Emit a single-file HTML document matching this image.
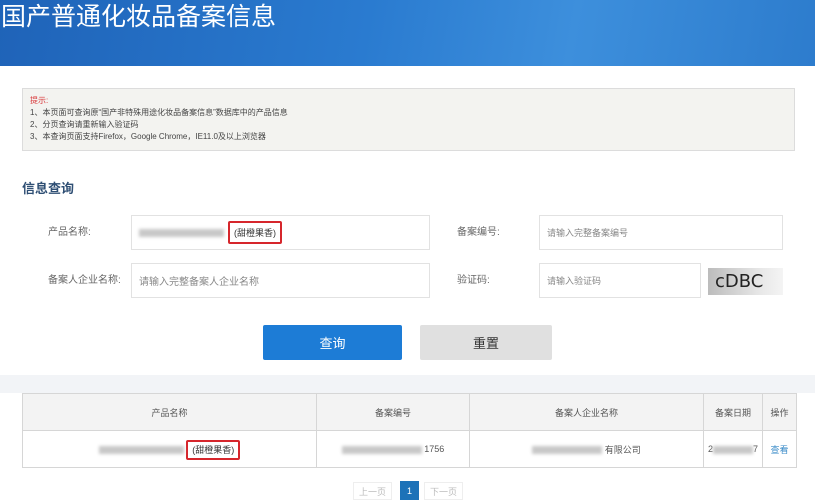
<!DOCTYPE html>
<html><head><meta charset="utf-8"><style>
*{margin:0;padding:0;box-sizing:border-box}
body{width:815px;height:500px;overflow:hidden;background:#fff;font-family:"Liberation Sans","Noto Sans CJK SC",sans-serif;position:relative;color:#555}
.abs{position:absolute}
.hdr{left:0;top:0;width:815px;height:66px;background:linear-gradient(100deg,#1f63b8 0%,#2a7bd0 45%,#3d8fdc 70%,#2d7ccd 100%)}
.hdr span{position:absolute;left:1px;top:0;font-size:25px;color:#fff;line-height:34px;letter-spacing:0}
.note{left:22px;top:88px;width:773px;height:63px;background:#f3f3f0;border:1px solid #dcdcdc;font-size:8px;line-height:12px;padding:6px 0 0 7px;color:#444}
.note .r{color:#d9383a}
.title{left:22px;top:178px;font-size:13px;font-weight:bold;color:#2f4f74}
.lbl{font-size:10px;color:#666;line-height:14px}
.inp{border:1px solid #e2e2e2;background:#fff;font-size:9px;color:#888;padding-left:7px;display:flex;align-items:center}
.btn{display:flex;align-items:center;justify-content:center;font-size:13px;border-radius:2px}
table{border-collapse:collapse;font-size:9px;color:#555}
td{border:1px solid #d6d6d6;text-align:center}
.red{border:2px solid #d6262c;border-radius:2px;padding:3px 4px;color:#333}
.blur{display:inline-block;height:8px;background:#c8c8c8;filter:blur(1.5px);vertical-align:middle}
.pg{font-size:9px;color:#bbb;display:flex;align-items:center;justify-content:center;border:1px solid #eee}
</style></head><body>
<div class="abs hdr"><span>国产普通化妆品备案信息</span></div>
<div class="abs note"><div class="r">提示:</div>1、本页面可查询原“国产非特殊用途化妆品备案信息”数据库中的产品信息<br>2、分页查询请重新输入验证码<br>3、本查询页面支持Firefox，Google Chrome，IE11.0及以上浏览器</div>
<div class="abs title">信息查询</div>
<div class="abs lbl" style="left:48px;top:226px">产品名称:</div>
<div class="abs inp" style="left:131px;top:215px;width:299px;height:35px"><span class="blur" style="width:85px"></span><span class="red" style="margin-left:4px;font-size:9px">(甜橙果香)</span></div>
<div class="abs lbl" style="left:457px;top:226px">备案编号:</div>
<div class="abs inp" style="left:539px;top:215px;width:244px;height:35px">请输入完整备案编号</div>
<div class="abs lbl" style="left:48px;top:274px">备案人企业名称:</div>
<div class="abs inp" style="left:131px;top:263px;width:299px;height:35px;font-size:10px">请输入完整备案人企业名称</div>
<div class="abs lbl" style="left:457px;top:274px">验证码:</div>
<div class="abs inp" style="left:539px;top:263px;width:162px;height:35px">请输入验证码</div>
<div class="abs" style="left:708px;top:268px;width:75px;height:27px;background:linear-gradient(90deg,#bcbcbc,#e8e8e8 70%,#f4f4f4);font-family:'DejaVu Sans',sans-serif;font-size:18px;color:#222;line-height:27px;padding-left:7px;letter-spacing:0">cDBC</div>
<div class="abs btn" style="left:263px;top:325px;width:139px;height:35px;background:#1d7cd6;color:#fff">查询</div>
<div class="abs btn" style="left:420px;top:325px;width:132px;height:35px;background:#e0e0e0;color:#333">重置</div>
<div class="abs" style="left:0;top:375px;width:815px;height:18px;background:#f2f4f7"></div>
<table class="abs" style="left:22px;top:393px;width:775px">
<tr style="height:37px;background:#f3f3f3"><td style="width:294px">产品名称</td><td style="width:153px">备案编号</td><td style="width:234px">备案人企业名称</td><td style="width:59px">备案日期</td><td>操作</td></tr>
<tr style="height:37px"><td><span class="blur" style="width:85px"></span> <span class="red">(甜橙果香)</span></td><td><span class="blur" style="width:80px"></span> 1756</td><td><span class="blur" style="width:70px"></span> 有限公司</td><td>2<span class="blur" style="width:40px"></span>7</td><td style="color:#3a8bc8">查看</td></tr>
</table>
<div class="abs pg" style="left:353px;top:482px;width:39px;height:18px">上一页</div>
<div class="abs pg" style="left:400px;top:481px;width:19px;height:19px;background:#1d72b8;color:#fff;border:none">1</div>
<div class="abs pg" style="left:424px;top:482px;width:39px;height:18px">下一页</div>
</body></html>
